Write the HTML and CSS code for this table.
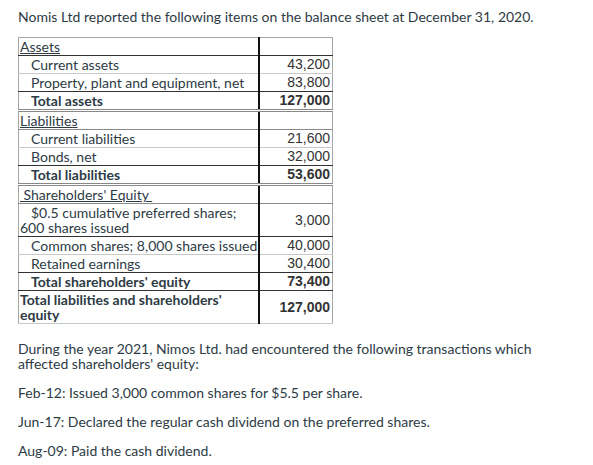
FILE: index.html
```html
<!DOCTYPE html>
<html lang="en">
<head>
    <meta charset="UTF-8">
    <meta name="viewport" content="width=device-width, initial-scale=1.0">
    <title>Balance sheet question</title>
    <link rel="stylesheet" href="styles.css">
</head>
<body>
    <div class="question">
        <p class="intro">Nomis Ltd reported the following items on the balance sheet at December 31, 2020.</p>
        <table class="sheet">
            <tr class="line-dark">
                <td class="head"><u>Assets</u></td>
                <td class="num"></td>
            </tr>
            <tr class="line-light">
                <td class="sub">Current assets</td>
                <td class="num">43,200</td>
            </tr>
            <tr class="line-dark">
                <td class="sub">Property, plant and equipment, net</td>
                <td class="num">83,800</td>
            </tr>
            <tr class="line-double">
                <td class="sub total">Total assets</td>
                <td class="num total">127,000</td>
            </tr>
            <tr class="line-mid">
                <td class="head"><u>Liabilities</u></td>
                <td class="num"></td>
            </tr>
            <tr class="line-light">
                <td class="sub">Current liabilities</td>
                <td class="num">21,600</td>
            </tr>
            <tr class="line-dark">
                <td class="sub">Bonds, net</td>
                <td class="num">32,000</td>
            </tr>
            <tr class="line-double">
                <td class="sub total">Total liabilities</td>
                <td class="num total">53,600</td>
            </tr>
            <tr class="line-mid">
                <td class="head"><u>&nbsp;Shareholders' Equity&nbsp;</u></td>
                <td class="num"></td>
            </tr>
            <tr class="line-dark">
                <td class="sub">$0.5 cumulative preferred shares; 600 shares issued</td>
                <td class="num">3,000</td>
            </tr>
            <tr class="line-light">
                <td class="sub nowrap">Common shares; 8,000 shares issued</td>
                <td class="num">40,000</td>
            </tr>
            <tr class="line-dark">
                <td class="sub">Retained earnings</td>
                <td class="num">30,400</td>
            </tr>
            <tr class="line-dark">
                <td class="sub total">Total shareholders' equity</td>
                <td class="num total">73,400</td>
            </tr>
            <tr class="line-light">
                <td class="total">Total liabilities and shareholders' equity</td>
                <td class="num total">127,000</td>
            </tr>
        </table>
        <p class="text">During the year 2021, Nimos Ltd. had encountered the following transactions which affected shareholders' equity:</p>
        <p class="text">Feb-12: Issued 3,000 common shares for $5.5 per share.</p>
        <p class="text">Jun-17: Declared the regular cash dividend on the preferred shares.</p>
        <p class="text">Aug-09: Paid the cash dividend.</p>
    </div>
</body>
</html>
```

FILE: styles.css
```css
*{
    box-sizing: border-box;
    margin: 0;
    padding: 0;
}
body{
    background: #fff;
    color: #2d3b45;
    font-family: Lato, "Open Sans", sans-serif;
    font-size: 14px;
    line-height: 15px;
}
.question{
    padding: 9px 0 0 18px;
    width: 560px;
}
.intro{
    margin-bottom: 13px;
}
.sheet{
    width: 314px;
    table-layout: fixed;
    border-collapse: collapse;
    border: 1px solid #a6a6a6;
    margin-bottom: 17px;
}
.sheet td{
    height: 18px;
    padding: 1px;
    vertical-align: middle;
    border-bottom: 1px solid #c8c8c8;
}
.sheet td:first-child{
    width: 240px;
    border-right: 2px solid #111;
}
.sheet .sub{
    text-indent: 11px;
}
.sheet .nowrap{
    white-space: nowrap;
}
.sheet .total{
    font-weight: bold;
}
.sheet .num{
    width: 74px;
    text-align: right;
    font-family: "Liberation Sans", Arial, sans-serif;
    color: #333;
    padding-right: 2px;
}
.line-dark td{
    border-bottom: 1px solid #333;
}
.line-mid td{
    border-bottom: 1px solid #8a8a8a;
}
.line-double td{
    border-bottom: 3px double #888;
}
.text{
    margin-bottom: 14px;
    width: 540px;
}
```
